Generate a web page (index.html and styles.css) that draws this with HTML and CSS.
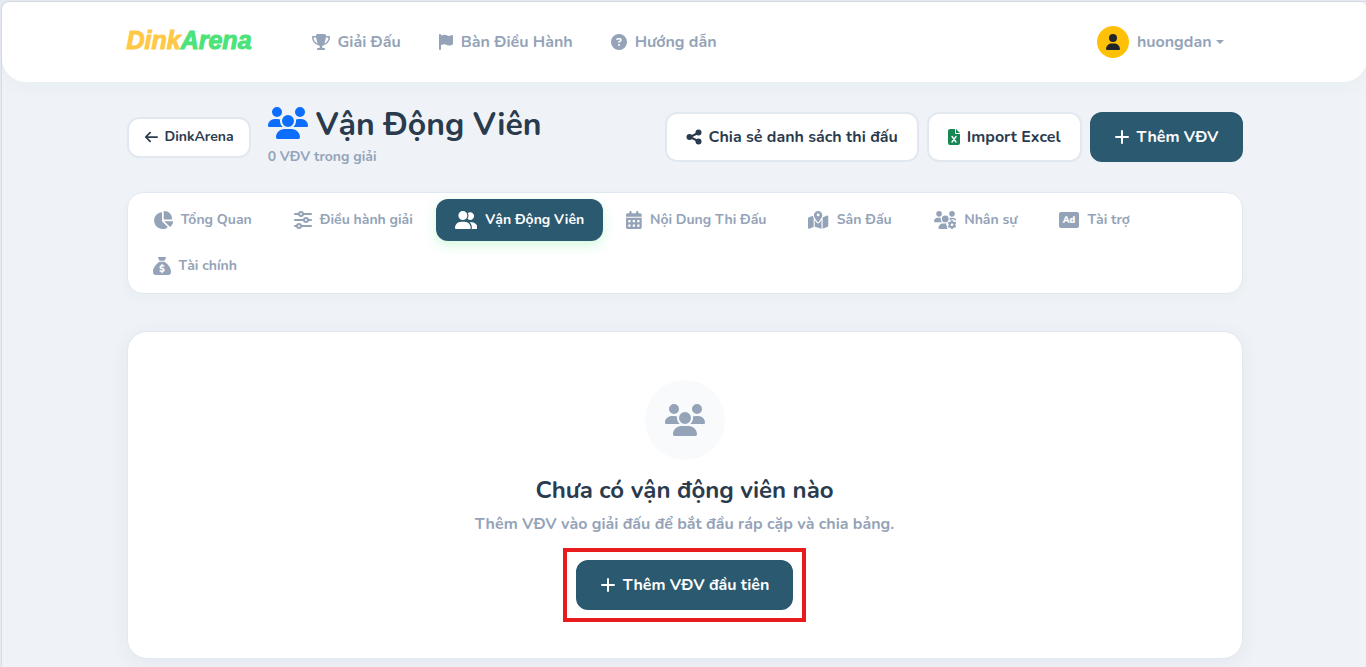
FILE: index.html
```html
<!DOCTYPE html>
<html lang="vi">
<head>
  <meta charset="UTF-8" />
  <meta name="viewport" content="width=device-width, initial-scale=1" />
  <title>Vận Động Viên - DinkArena</title>
  <link rel="stylesheet" href="styles.css">
</head>
<body>
  <svg class="sprite" aria-hidden="true">
    <symbol id="i-users" viewBox="0 0 640 512">
      <path d="M144 0a80 80 0 1 1 0 160A80 80 0 1 1 144 0zM512 0a80 80 0 1 1 0 160A80 80 0 1 1 512 0zM0 298.7C0 239.8 47.8 192 106.7 192l42.7 0c15.9 0 31 3.5 44.6 9.7c-1.3 7.2-1.9 14.7-1.9 22.3c0 38.2 16.8 72.5 43.3 96L21.3 320C9.6 320 0 310.4 0 298.7zM405.3 320c26.6-23.5 42.7-57.8 42.7-96c0-7.6-.7-15-1.9-22.3c13.6-6.3 28.7-9.7 44.6-9.7l42.7 0C592.2 192 640 239.8 640 298.7c0 11.8-9.6 21.3-21.3 21.3zM224 224a96 96 0 1 1 192 0 96 96 0 1 1 -192 0zM128 485.3C128 411.7 187.7 352 261.3 352l117.3 0C452.3 352 512 411.7 512 485.3c0 14.7-11.9 26.7-26.7 26.7l-330.7 0c-14.7 0-26.7-11.9-26.7-26.7z"/>
    </symbol>
    <symbol id="i-plus" viewBox="0 0 16 16">
      <path d="M8 2v12M2 8h12" fill="none" stroke="currentColor" stroke-width="2" stroke-linecap="round"/>
    </symbol>
  </svg>

  <div class="frame">
    <header class="topbar">
      <div class="container topbar-inner">
        <a class="logo" href="#"><span class="logo-dink">Dink</span><span class="logo-arena">Arena</span></a>
        <nav class="main-nav">
          <a href="#">
            <svg class="nav-icon" viewBox="0 0 576 512"><path d="M400 0L176 0c-26.5 0-48.1 21.8-47.1 48.2c.2 5.3 .4 10.6 .7 15.8L24 64C10.7 64 0 74.7 0 88c0 92.6 33.5 157 78.5 200.7c44.3 43.1 98.3 64.8 138.1 75.8c23.4 6.5 39.4 26 39.4 45.6c0 20.9-17 37.9-37.9 37.9L192 448c-17.7 0-32 14.3-32 32s14.3 32 32 32l192 0c17.7 0 32-14.3 32-32s-14.3-32-32-32l-26.1 0C337 448 320 431 320 410.1c0-19.6 15.9-39.2 39.4-45.6c39.9-11 93.9-32.7 138.2-75.8C542.5 245 576 180.6 576 88c0-13.3-10.7-24-24-24L446.4 64c.3-5.2 .5-10.4 .7-15.8C448.1 21.8 426.5 0 400 0zM48.9 112l84.4 0c9.1 90.1 29.2 150.3 51.9 190.6c-24.9-11-50.8-26.5-73.2-48.3c-32-31.1-58-76-63-142.3zM464.1 254.3c-22.4 21.8-48.3 37.3-73.2 48.3c22.7-40.3 42.8-100.5 51.9-190.6l84.4 0c-5.1 66.3-31.1 111.2-63 142.3z"/></svg>
            Giải Đấu
          </a>
          <a href="#">
            <svg class="nav-icon" viewBox="0 0 448 512"><path d="M64 32C64 14.3 49.7 0 32 0S0 14.3 0 32L0 480c0 17.7 14.3 32 32 32s32-14.3 32-32l0-128 64.3-16.1c41.1-10.3 84.6-5.5 122.5 13.4c44.2 22.1 95.5 24.8 141.7 7.4l34.7-13c12.5-4.7 20.8-16.6 20.8-30l0-247.7c0-23-24.2-38-44.8-27.7l-9.6 4.8c-46.3 23.2-100.8 23.2-147.1 0c-35.1-17.6-75.4-22-113.5-12.5L64 48l0-16z"/></svg>
            Bàn Điều Hành
          </a>
          <a href="#">
            <svg class="nav-icon" viewBox="0 0 512 512"><path d="M256 512A256 256 0 1 0 256 0a256 256 0 1 0 0 512zM169.8 165.3c7.9-22.3 29.1-37.3 52.8-37.3l58.3 0c34.9 0 63.1 28.3 63.1 63.1c0 22.6-12.1 43.5-31.7 54.8L280 264.4c-.2 13-10.9 23.6-24 23.6c-13.3 0-24-10.7-24-24l0-13.5c0-8.6 4.6-16.5 12.1-20.8l44.3-25.4c4.7-2.7 7.6-7.7 7.6-13.1c0-8.4-6.8-15.1-15.1-15.1l-58.3 0c-3.4 0-6.4 2.1-7.5 5.3l-.4 1.2c-4.4 12.5-18.2 19-30.6 14.6s-19-18.2-14.6-30.6l.4-1.2zM224 352a32 32 0 1 1 64 0 32 32 0 1 1 -64 0z"/></svg>
            Hướng dẫn
          </a>
        </nav>
        <button class="user-menu" type="button">
          <span class="avatar">
            <svg viewBox="0 0 448 512"><path d="M224 256A128 128 0 1 0 224 0a128 128 0 1 0 0 256zm-45.7 48C79.8 304 0 383.8 0 482.3C0 498.7 13.3 512 29.7 512l388.6 0c16.4 0 29.7-13.3 29.7-29.7C448 383.8 368.2 304 269.7 304l-91.4 0z"/></svg>
          </span>
          <span class="user-name">huongdan</span>
        </button>
      </div>
    </header>

    <main class="container">
      <div class="page-head">
        <a class="btn btn-light btn-small" href="#">
          <svg class="btn-icon" viewBox="0 0 16 16"><path d="M15 8H2M7 3L2 8l5 5" fill="none" stroke="currentColor" stroke-width="2" stroke-linecap="round" stroke-linejoin="round"/></svg>
          DinkArena
        </a>
        <div class="page-title">
          <h1><svg class="title-icon"><use href="#i-users"/></svg>Vận Động Viên</h1>
          <p>0 VĐV trong giải</p>
        </div>
        <div class="actions">
          <button class="btn btn-light" type="button">
            <svg class="btn-icon" viewBox="0 0 16 16"><path d="M12 4L4 8l8 4" fill="none" stroke="currentColor" stroke-width="2"/><circle cx="12.500" cy="3.500" r="3"/><circle cx="3.500" cy="8" r="3"/><circle cx="12.500" cy="12.500" r="3"/></svg>
            Chia sẻ danh sách thi đấu
          </button>
          <button class="btn btn-light" type="button">
            <svg class="btn-icon excel-icon" viewBox="0 0 12 16"><path d="M2 0h5v4a1 1 0 0 0 1 1h4v9a2 2 0 0 1-2 2H2a2 2 0 0 1-2-2V2a2 2 0 0 1 2-2zM8 0l4 4H8z"/><path d="M4 7.500l4 5.500M8 7.500L4 13" fill="none" stroke="#fff" stroke-width="1.400" stroke-linecap="round"/></svg>
            Import Excel
          </button>
          <button class="btn btn-primary" type="button"><svg class="btn-icon"><use href="#i-plus"/></svg>Thêm VĐV</button>
        </div>
      </div>

      <nav class="tabs">
        <a class="tab" href="#">
          <svg class="tab-icon" viewBox="0 0 576 512"><path d="M304 240l0-223.4c0-9 7-16.6 16-16.6C443.7 0 544 100.3 544 224c0 9-7.600 16-16.600 16L304 240zM32 272C32 150.700 122.100 50.300 239 34.300c9.200-1.300 17 6.100 17 15.400L256 288 412.500 444.500c6.700 6.700 6.200 17.700-1.500 23.100C371.800 495.600 323.800 512 272 512C139.500 512 32 404.600 32 272zm526.400 16c9.300 0 16.600 7.800 15.400 17c-7.700 55.900-34.600 105.600-73.900 142.300c-6 5.600-15.400 5.200-21.200-.7L320 288l238.400 0z"/></svg>
          Tổng Quan
        </a>
        <a class="tab" href="#">
          <svg class="tab-icon" viewBox="0 0 18 18"><g fill="none" stroke="currentColor" stroke-width="2" stroke-linecap="round"><path d="M1 3h4M9 3h8M1 9h9M14 9h3M1 15h2M7 15h10"/><circle cx="7" cy="3" r="2"/><circle cx="12" cy="9" r="2"/><circle cx="5" cy="15" r="2"/></g></svg>
          Điều hành giải
        </a>
        <a class="tab active" href="#">
          <svg class="tab-icon" viewBox="0 0 640 512"><path d="M96 128a128 128 0 1 1 256 0A128 128 0 1 1 96 128zM0 482.3C0 383.8 79.8 304 178.3 304l91.4 0C368.2 304 448 383.8 448 482.3c0 16.4-13.3 29.7-29.7 29.7L29.7 512C13.3 512 0 498.7 0 482.3zM609.3 512l-137.8 0c5.4-9.4 8.6-20.3 8.6-32l0-8c0-60.7-27.1-115.2-69.8-151.8c2.4-.1 4.7-.2 7.1-.2l61.4 0C567.8 320 640 392.2 640 481.3c0 17-13.8 30.7-30.7 30.7zM432 256c-31 0-59-12.600-79.300-32.900C372.400 196.500 384 163.600 384 128c0-26.800-6.600-52.100-18.300-74.300C384.300 40.100 407.200 32 432 32c61.900 0 112 50.100 112 112s-50.100 112-112 112z"/></svg>
          Vận Động Viên
        </a>
        <a class="tab" href="#">
          <svg class="tab-icon" viewBox="0 0 448 512"><path fill-rule="evenodd" d="M128 0c17.700 0 32 14.300 32 32l0 32 128 0 0-32c0-17.700 14.300-32 32-32s32 14.300 32 32l0 32 48 0c26.500 0 48 21.500 48 48l0 48L0 160l0-48C0 85.500 21.500 64 48 64l48 0 0-32c0-17.700 14.300-32 32-32zM0 192l448 0 0 272c0 26.500-21.500 48-48 48L48 512c-26.500 0-48-21.500-48-48L0 192zM64 256v64h64v-64zM192 256v64h64v-64zM320 256v64h64v-64zM64 384v64h64v-64zM192 384v64h64v-64zM320 384v64h64v-64z"/></svg>
          Nội Dung Thi Đấu
        </a>
        <a class="tab" href="#">
          <svg class="tab-icon" viewBox="0 0 576 512"><path d="M408 120c0 54.600-73.100 151.900-105.200 192c-7.700 9.600-22 9.600-29.600 0C241.100 271.900 168 174.600 168 120C168 53.700 221.700 0 288 0s120 53.700 120 120zm8 80.400c3.500-6.900 6.700-13.800 9.600-20.600c.5-1.200 1-2.500 1.500-3.700l116-46.400C558.900 123.400 576 135 576 152l0 270.800c0 9.800-6 18.600-15.100 22.300L416 503l0-302.600zM137.600 138.300c2.400 14.100 7.200 28.300 12.800 41.500c2.900 6.800 6.100 13.700 9.600 20.600l0 251.400L32.900 502.700C17.100 509 0 497.400 0 480.400L0 209.600c0-9.800 6-18.600 15.100-22.300l122.600-49zM327.800 332c13.900-17.400 35.700-45.700 56.200-77l0 249.300L192 449.400 192 255c20.500 31.300 42.300 59.600 56.200 77c20.500 25.600 59.100 25.600 79.600 0zM288 152a40 40 0 1 0 0-80 40 40 0 1 0 0 80z"/></svg>
          Sân Đấu
        </a>
        <a class="tab" href="#">
          <svg class="tab-icon" viewBox="0 0 640 512"><path d="M144 0a80 80 0 1 1 0 160A80 80 0 1 1 144 0zM512 0a80 80 0 1 1 0 160A80 80 0 1 1 512 0zM0 298.700C0 239.800 47.800 192 106.700 192l42.700 0c15.900 0 31 3.500 44.600 9.700c-1.300 7.200-1.900 14.700-1.900 22.300c0 38.200 16.800 72.500 43.300 96L21.300 320C9.600 320 0 310.400 0 298.700zM224 224a96 96 0 1 1 192 0 96 96 0 1 1 -192 0zM446 202c14-6 29-10 45-10h43c48 0 88 31 101 72h-55l-20-26h-60l-24 34-28-6zM128 485.300C128 411.700 187.700 352 261.300 352l88.700 0-10 42 34 36-12 42 30 40-237.300 0c-14.700 0-26.700-11.900-26.700-26.700z"/><circle cx="512" cy="392" r="68" fill="none" stroke="currentColor" stroke-width="60"/><path d="M512 266v44M512 474v44M403 329l38 22M583 433l38 22M403 455l38-22M583 351l38-22" fill="none" stroke="currentColor" stroke-width="52"/></svg>
          Nhân sự
        </a>
        <a class="tab" href="#">
          <svg class="tab-icon" viewBox="0 0 20 18"><rect y="1" width="20" height="16" rx="2"/><text x="10" y="12" class="icon-text">Ad</text></svg>
          Tài trợ
        </a>
        <a class="tab" href="#">
          <svg class="tab-icon" viewBox="0 0 18 18"><path d="M5.500 0h7q1 .3 .5 1.100L11.300 3.700H6.700L5 1.100Q4.500 .3 5.500 0zM6.500 4.800h5C15 7.500 18 10.500 18 14.800Q18 18 15 18H3Q0 18 0 14.800C0 10.500 3 7.500 6.500 4.800z"/><text x="9" y="15" class="icon-text">$</text></svg>
          Tài chính
        </a>
      </nav>

      <section class="empty-card">
        <div class="empty-icon"><svg><use href="#i-users"/></svg></div>
        <h2>Chưa có vận động viên nào</h2>
        <p>Thêm VĐV vào giải đấu để bắt đầu ráp cặp và chia bảng.</p>
        <div class="highlight">
          <button class="btn btn-primary" type="button"><svg class="btn-icon"><use href="#i-plus"/></svg>Thêm VĐV đầu tiên</button>
        </div>
      </section>
    </main>
  </div>
</body>
</html>
```
FILE: styles.css
```css
* {
  box-sizing: border-box;
}
html {
  background-color: #e6ebf3;
}
body {
  margin: 0;
  padding: 1px 0 0 1px;
  font-family: "Nunito", "Noto Sans", sans-serif;
  font-size: 16px;
  font-weight: 700;
  line-height: 24px;
  color: #2b3b4e;
  overflow: hidden;
}
a {
  color: inherit;
  text-decoration: none;
}
button {
  font: inherit;
  cursor: pointer;
}
svg {
  display: block;
  flex: none;
  fill: currentColor;
}
.sprite {
  position: absolute;
  width: 0;
  height: 0;
}
.frame {
  box-sizing: content-box;
  width: 100%;
  min-height: 100vh;
  border-top: 1px solid #d6dce2;
  border-left: 1px solid #d6dce2;
  border-top-left-radius: 8px;
  background-color: #eff3f8;
}
.container {
  max-width: 1140px;
  margin: 0 auto;
  padding: 0 12px;
}

/* top bar */
.topbar {
  background-color: #fff;
  border-radius: 8px 8px 24px 24px;
  box-shadow: 0 4px 20px rgba(43, 59, 78, 0.03);
}
.topbar-inner {
  display: flex;
  align-items: center;
  height: 80px;
}
.logo {
  margin-bottom: 4px;
  font-family: "Arial Black", "Liberation Sans", sans-serif;
  font-size: 25px;
  font-weight: 900;
  font-style: italic;
  -webkit-text-stroke: 1px;
}
.logo-dink {
  color: #ffc845;
}
.logo-arena {
  color: #4be37a;
}
.main-nav {
  display: flex;
  gap: 38px;
  margin-left: 60px;
  color: #94a3b8;
}
.main-nav a {
  display: flex;
  align-items: center;
  gap: 8px;
}
.nav-icon {
  height: 16px;
}
.user-menu {
  display: flex;
  align-items: center;
  gap: 8px;
  margin-left: auto;
  margin-right: 19px;
  padding: 0;
  border: 0;
  background: none;
  color: #94a3b8;
}
.user-name::after {
  content: "";
  display: inline-block;
  margin-left: 4px;
  vertical-align: 3px;
  border-top: 4px solid;
  border-left: 4px solid transparent;
  border-right: 4px solid transparent;
}
.avatar {
  display: flex;
  align-items: center;
  justify-content: center;
  width: 32px;
  height: 32px;
  border-radius: 50%;
  background-color: #ffc107;
  color: #212529;
}
.avatar svg {
  height: 16px;
}

/* buttons */
.btn {
  display: flex;
  align-items: center;
  gap: 7px;
  height: 50px;
  padding: 0 19px;
  border: 2px solid #e2e8f0;
  border-radius: 12px;
}
.btn-light {
  background-color: #fff;
  color: #2b3b4e;
}
.btn-primary {
  padding: 0 22px;
  border-color: #2b5970;
  background-color: #2b5970;
  color: #fff;
}
.btn-small {
  height: 41px;
  padding: 0 15px;
  font-size: 14px;
}
.btn-icon {
  width: 16px;
  height: 16px;
}
.btn-small .btn-icon {
  width: 14px;
  height: 14px;
}
.excel-icon {
  width: 12px;
  color: #198754;
}

/* page heading */
.page-head {
  display: flex;
  align-items: center;
  gap: 17px;
  margin: 23px 0;
}
.page-title h1 {
  display: flex;
  align-items: center;
  gap: 8px;
  margin: 0;
  font-size: 32px;
  font-weight: 700;
  line-height: 40px;
}
.title-icon {
  width: 40px;
  height: 32px;
  margin-bottom: 4px;
  color: #0d6efd;
}
.page-title p {
  margin: 0;
  font-size: 14px;
  color: #94a3b8;
}
.actions {
  display: flex;
  gap: 8px;
  margin-left: auto;
}

/* tabs */
.tabs {
  display: flex;
  flex-wrap: wrap;
  gap: 4px;
  padding: 6px;
  border: 1px solid #e2e8f0;
  border-radius: 16px;
  background-color: #fff;
  box-shadow: 0 4px 12px rgba(43, 59, 78, 0.03);
}
.tab {
  display: flex;
  align-items: center;
  gap: 8px;
  height: 42px;
  padding: 0 19px;
  border-radius: 12px;
  font-size: 14px;
  color: #94a3b8;
}
.tab.active {
  background-color: #2b5970;
  color: #fff;
  box-shadow: 0 4px 12px rgba(75, 227, 122, 0.25);
}
.tab-icon {
  height: 18px;
}
.icon-text {
  fill: #fff;
  font-weight: 900;
  font-size: 9px;
  text-anchor: middle;
}

/* empty state */
.empty-card {
  display: flex;
  flex-direction: column;
  align-items: center;
  margin-top: 37px;
  padding: 48px;
  border: 1px solid #e2e8f0;
  border-radius: 20px;
  background-color: #fff;
  box-shadow: 0 4px 20px rgba(43, 59, 78, 0.06);
}
.empty-icon {
  display: flex;
  align-items: center;
  justify-content: center;
  width: 80px;
  height: 80px;
  border-radius: 50%;
  background-color: #f8fafc;
  color: #94a3b8;
}
.empty-icon svg {
  width: 40px;
  height: 32px;
}
.empty-card h2 {
  margin: 15px 0 7px;
  font-size: 24px;
  font-weight: 700;
  line-height: 30px;
}
.empty-card p {
  margin: 0 0 24px;
  color: #94a3b8;
}
.highlight {
  position: relative;
}
/* red marker around the button */
.highlight::after {
  content: "";
  position: absolute;
  inset: -12px -13px;
  border: 4px solid #e81c1c;
  pointer-events: none;
}
```
